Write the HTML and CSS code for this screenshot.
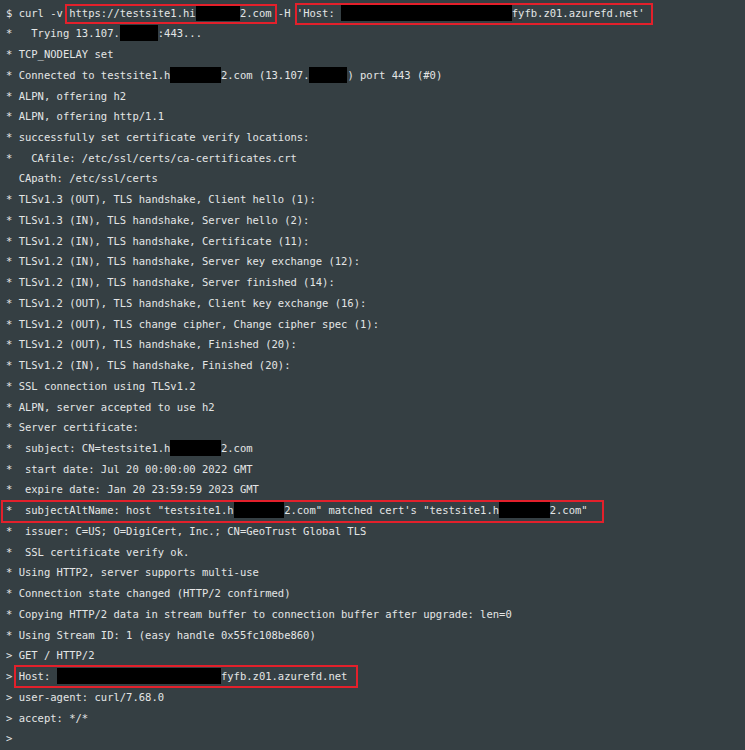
FILE: index.html
```html
<!DOCTYPE html>
<html>
<head>
<meta charset="utf-8">
<link rel="stylesheet" href="styles.css">
</head>
<body>
<div class="term">
<div class="ln">$ curl -v <span class="box b1">https://testsite1.hi<span class="redact">       </span>2.com</span> -H <span class="box b2">'Host: <span class="redact">                           </span>fyfb.z01.azurefd.net'</span></div>
<div class="ln">*   Trying 13.107.<span class="redact">      </span>:443...</div>
<div class="ln">* TCP_NODELAY set</div>
<div class="ln">* Connected to testsite1.h<span class="redact">        </span>2.com (13.107.<span class="redact">      </span>) port 443 (#0)</div>
<div class="ln">* ALPN, offering h2</div>
<div class="ln">* ALPN, offering http/1.1</div>
<div class="ln">* successfully set certificate verify locations:</div>
<div class="ln">*   CAfile: /etc/ssl/certs/ca-certificates.crt</div>
<div class="ln">  CApath: /etc/ssl/certs</div>
<div class="ln">* TLSv1.3 (OUT), TLS handshake, Client hello (1):</div>
<div class="ln">* TLSv1.3 (IN), TLS handshake, Server hello (2):</div>
<div class="ln">* TLSv1.2 (IN), TLS handshake, Certificate (11):</div>
<div class="ln">* TLSv1.2 (IN), TLS handshake, Server key exchange (12):</div>
<div class="ln">* TLSv1.2 (IN), TLS handshake, Server finished (14):</div>
<div class="ln">* TLSv1.2 (OUT), TLS handshake, Client key exchange (16):</div>
<div class="ln">* TLSv1.2 (OUT), TLS change cipher, Change cipher spec (1):</div>
<div class="ln">* TLSv1.2 (OUT), TLS handshake, Finished (20):</div>
<div class="ln">* TLSv1.2 (IN), TLS handshake, Finished (20):</div>
<div class="ln">* SSL connection using TLSv1.2</div>
<div class="ln">* ALPN, server accepted to use h2</div>
<div class="ln">* Server certificate:</div>
<div class="ln">*  subject: CN=testsite1.h<span class="redact">        </span>2.com</div>
<div class="ln">*  start date: Jul 20 00:00:00 2022 GMT</div>
<div class="ln">*  expire date: Jan 20 23:59:59 2023 GMT</div>
<div class="ln"><span class="box b3">*  subjectAltName: host "testsite1.h<span class="redact">        </span>2.com" matched cert's "testsite1.h<span class="redact">        </span>2.com"</span></div>
<div class="ln">*  issuer: C=US; O=DigiCert, Inc.; CN=GeoTrust Global TLS</div>
<div class="ln">*  SSL certificate verify ok.</div>
<div class="ln">* Using HTTP2, server supports multi-use</div>
<div class="ln">* Connection state changed (HTTP/2 confirmed)</div>
<div class="ln">* Copying HTTP/2 data in stream buffer to connection buffer after upgrade: len=0</div>
<div class="ln">* Using Stream ID: 1 (easy handle 0x55fc108be860)</div>
<div class="ln">&gt; GET / HTTP/2</div>
<div class="ln">&gt; <span class="box b4">Host: <span class="redact">                          </span>fyfb.z01.azurefd.net</span></div>
<div class="ln">&gt; user-agent: curl/7.68.0</div>
<div class="ln">&gt; accept: */*</div>
<div class="ln">&gt;</div>
</div>
</body>
</html>
```
FILE: styles.css
```css
html, body {
  margin: 0;
  padding: 0;
  background: #353f43;
}
.term {
  width: 745px;
  height: 750px;
  box-sizing: border-box;
  padding: 2.6px 0 0 6px;
  background: #353f43;
  color: #e4e6e6;
  font-family: "DejaVu Sans Mono", "Liberation Mono", monospace;
  font-size: 10.5px;
  overflow: hidden;
}
.ln {
  height: 20.74px;
  line-height: 20.74px;
  white-space: pre;
}
.redact {
  background: #000;
  padding: 2px 0;
}
.box {
  position: relative;
  display: inline-block;
  height: 20.74px;
  vertical-align: top;
}
.box::after {
  content: "";
  position: absolute;
  border: 2px solid #e3202b;
  pointer-events: none;
}
.b1::after { top: 1px; bottom: -1px; left: -4px; right: -5px; }
.b2::after { top: 0px; bottom: -2px; left: -2px; right: -8px; }
.b3::after { top: -0.5px; bottom: -2px; left: -5px; right: -16px; }
.b4::after { top: -1px; bottom: -1px; left: -5px; right: -11px; }
```
